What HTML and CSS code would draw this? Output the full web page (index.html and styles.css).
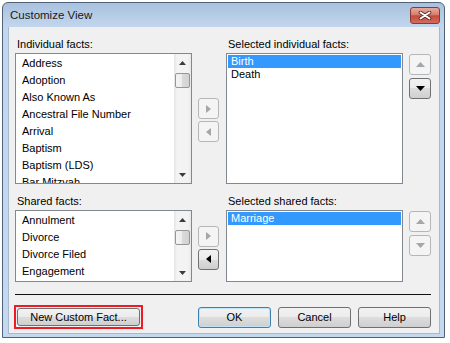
FILE: index.html
```html
<!DOCTYPE html>
<html lang="en">
<head>
    <meta charset="UTF-8">
    <title>Customize View</title>
    <link rel="stylesheet" href="styles.css">
</head>
<body>
    <div class="window">
        <div class="titlebar">
            <span class="title">Customize View</span>
            <div class="close">
                <svg width="14" height="9" viewBox="0 0 14 9">
                    <path d="M2.5 1.5L11.5 7.5M11.5 1.5L2.5 7.5" stroke="#5e2620" stroke-width="3.6" stroke-linecap="round"/>
                    <path d="M2.5 1.5L11.5 7.5M11.5 1.5L2.5 7.5" stroke="#fff" stroke-width="2" stroke-linecap="round"/>
                </svg>
            </div>
        </div>

        <div class="client">
            <!-- individual facts -->
            <div class="pane">
                <div class="label">Individual facts:</div>
                <div class="label label-right">Selected individual facts:</div>

                <div class="list list-tall">
                    <div class="items">
                        <div>Address</div>
                        <div>Adoption</div>
                        <div>Also Known As</div>
                        <div>Ancestral File Number</div>
                        <div>Arrival</div>
                        <div>Baptism</div>
                        <div>Baptism (LDS)</div>
                        <div>Bar Mitzvah</div>
                    </div>
                    <div class="scrollbar">
                        <div class="sb-arrow"><svg width="7" height="4" viewBox="0 0 7 4"><path d="M0 4L3.5 0L7 4Z"/></svg></div>
                        <div class="sb-thumb"></div>
                        <div class="sb-track"></div>
                        <div class="sb-arrow"><svg width="7" height="4" viewBox="0 0 7 4"><path d="M0 0L3.5 4L7 0Z"/></svg></div>
                    </div>
                </div>

                <div class="movers">
                    <div class="icon-btn"><svg width="5" height="8" viewBox="0 0 5 8"><path d="M0 0L5 4L0 8Z"/></svg></div>
                    <div class="icon-btn"><svg width="5" height="8" viewBox="0 0 5 8"><path d="M5 0L0 4L5 8Z"/></svg></div>
                </div>

                <div class="list list-tall selected">
                    <div class="items">
                        <div class="sel">Birth</div>
                        <div>Death</div>
                    </div>
                </div>

                <div class="updown">
                    <div class="icon-btn"><svg width="9" height="5" viewBox="0 0 9 5"><path d="M0 5L4.5 0L9 5Z"/></svg></div>
                    <div class="icon-btn enabled"><svg width="9" height="5" viewBox="0 0 9 5"><path d="M0 0L4.5 5L9 0Z"/></svg></div>
                </div>
            </div>

            <!-- shared facts -->
            <div class="pane pane-shared">
                <div class="label">Shared facts:</div>
                <div class="label label-right">Selected shared facts:</div>

                <div class="list list-short">
                    <div class="items">
                        <div>Annulment</div>
                        <div>Divorce</div>
                        <div>Divorce Filed</div>
                        <div>Engagement</div>
                    </div>
                    <div class="scrollbar">
                        <div class="sb-arrow"><svg width="7" height="4" viewBox="0 0 7 4"><path d="M0 4L3.5 0L7 4Z"/></svg></div>
                        <div class="sb-thumb"></div>
                        <div class="sb-track"></div>
                        <div class="sb-arrow"><svg width="7" height="4" viewBox="0 0 7 4"><path d="M0 0L3.5 4L7 0Z"/></svg></div>
                    </div>
                </div>

                <div class="movers">
                    <div class="icon-btn"><svg width="5" height="8" viewBox="0 0 5 8"><path d="M0 0L5 4L0 8Z"/></svg></div>
                    <div class="icon-btn enabled"><svg width="5" height="8" viewBox="0 0 5 8"><path d="M5 0L0 4L5 8Z"/></svg></div>
                </div>

                <div class="list list-short selected">
                    <div class="items">
                        <div class="sel">Marriage</div>
                    </div>
                </div>

                <div class="updown">
                    <div class="icon-btn"><svg width="9" height="5" viewBox="0 0 9 5"><path d="M0 5L4.5 0L9 5Z"/></svg></div>
                    <div class="icon-btn"><svg width="9" height="5" viewBox="0 0 9 5"><path d="M0 0L4.5 5L9 0Z"/></svg></div>
                </div>
            </div>

            <div class="separator"></div>

            <div class="footer">
                <div class="highlight">
                    <div class="btn btn-custom">New Custom Fact...</div>
                </div>
                <div class="actions">
                    <div class="btn btn-default">OK</div>
                    <div class="btn">Cancel</div>
                    <div class="btn">Help</div>
                </div>
            </div>
        </div>
    </div>
</body>
</html>
```

FILE: styles.css
```css
body { margin: 0; background: #fff; font-family: "Liberation Sans", Arial, sans-serif; font-size: 11px; color: #000; }

.window { margin: 2px 0 0 2px; width: 443px; height: 336px; box-sizing: border-box; border: 1px solid #4f6279; border-radius: 6px 6px 0 0; background: linear-gradient(#a9c1de, #c2d6ed 24px, #c4d8ef); padding: 0 4px 3px 5px; display: flex; flex-direction: column; }
.titlebar { height: 24px; flex: none; display: flex; align-items: center; justify-content: space-between; padding-left: 2px; }
.title { font-size: 11.5px; color: #1a1a1a; }
.close { width: 30px; height: 17px; box-sizing: border-box; border: 1px solid #8b3a32; border-radius: 3px; background: linear-gradient(#e6aa9d, #d77d6f 45%, #c44b3b 52%, #d26d5e); display: flex; align-items: center; justify-content: center; }

.client { flex: 1; background: #f0f0f0; border: 1px solid #a9b9cc; border-top: none; padding: 11px 8px 0 6px; }

.pane { display: grid; grid-template-columns: 177px 22px 177px 22px; grid-template-rows: 13px auto; column-gap: 6px; row-gap: 2px; }
.pane-shared { margin-top: 11px; }
.label { line-height: 13px; padding-left: 2px; white-space: nowrap; grid-row: 1; grid-column: 1; }
.label-right { grid-column: 3; }
.pane > .list, .pane > .movers, .pane > .updown { grid-row: 2; }

.list { background: #fff; border: 1px solid #828790; box-sizing: border-box; display: flex; overflow: hidden; grid-column: 1; }
.list.selected { grid-column: 3; }
.list-tall { height: 131px; }
.list-short { height: 72px; }
.items { flex: 1; overflow: hidden; padding: 1px 0 0 1px; }
.items div { line-height: 17px; padding-left: 5px; white-space: nowrap; }
.selected .items { padding: 1px; }
.selected .items div { line-height: 13px; padding-left: 3px; }
.items .sel { background: #3399ff; color: #fff; }

.scrollbar { width: 17px; flex: none; display: flex; flex-direction: column; background: linear-gradient(90deg, #e4e4e4, #f3f3f3 3px, #f3f3f3 14px, #e8e8e8); }
.sb-arrow { height: 17px; display: flex; align-items: center; justify-content: center; fill: #3c3c3c; }
.sb-thumb { height: 15px; margin: 2px 1px 0; box-sizing: border-box; border: 1px solid #969696; border-radius: 2px; background: linear-gradient(90deg, #f4f4f4, #ececec 50%, #dadada 50%, #d2d2d2); }
.sb-track { flex: 1; }

.movers { grid-column: 2; display: flex; flex-direction: column; gap: 2px; align-self: center; margin-top: 3px; }
.updown { grid-column: 4; display: flex; flex-direction: column; gap: 3px; align-self: start; margin-top: 1px; }
.icon-btn { width: 21px; height: 21px; box-sizing: border-box; border: 1px solid #b3b7ba; border-radius: 3px; background: #f4f4f4; display: flex; align-items: center; justify-content: center; fill: #a6a6a6; }
.updown .icon-btn { width: 22px; }
.icon-btn.enabled { border-color: #707070; background: linear-gradient(#f2f2f2, #ebebeb 50%, #dddddd 50%, #cfcfcf); fill: #000; }

.separator { height: 1px; background: #111; margin-top: 12px; }

.footer { display: flex; justify-content: space-between; align-items: center; margin-top: 10px; }
.highlight { border: 2px solid #ed1c24; padding: 1px; margin-left: -1px; }
.actions { display: flex; gap: 7px; }
.btn { width: 73px; height: 21px; box-sizing: border-box; border: 1px solid #707070; border-radius: 3px; background: linear-gradient(#f2f2f2, #ebebeb 50%, #dddddd 50%, #cfcfcf); display: flex; align-items: center; justify-content: center; white-space: nowrap; }
.btn-custom { width: 123px; height: 18px; }
.btn-default { border-color: #3c7fb1; box-shadow: inset 0 0 0 1px #bfe3f7; }
```
